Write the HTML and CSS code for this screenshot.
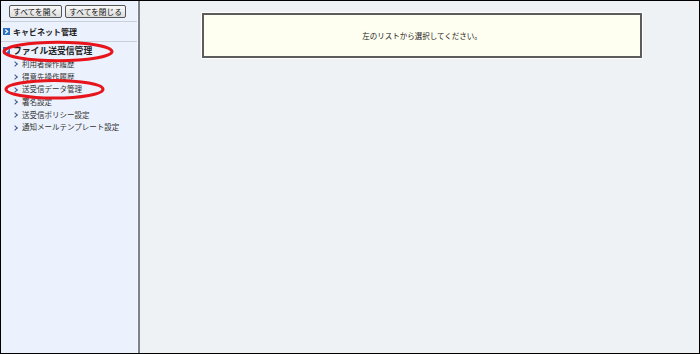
FILE: index.html
```html
<!DOCTYPE html>
<html lang="ja">
<head>
<meta charset="utf-8">
<link rel="stylesheet" href="styles.css">
</head>
<body>
<div class="frame">
  <aside class="side">
    <div class="btns">
      <button class="btn">すべてを開く</button>
      <button class="btn">すべてを閉じる</button>
    </div>
    <div class="group">
      <span class="gicon"><svg width="7" height="7" viewBox="0 0 7 7"><rect width="7" height="7" fill="#2a6fc0"/><path d="M2.3 1.5 L4.6 3.5 L2.3 5.5" fill="none" stroke="#fff" stroke-width="1.3"/></svg></span>
      <span class="gtitle">キャビネット管理</span>
    </div>
    <div class="group open">
      <span class="gicon"><svg width="7" height="7" viewBox="0 0 7 7"><rect width="7" height="7" fill="#2a6fc0"/><path d="M1.5 2.3 L3.5 4.6 L5.5 2.3" fill="none" stroke="#fff" stroke-width="1.3"/></svg></span>
      <span class="gtitle big">ファイル送受信管理</span>
    </div>
    <ul class="items">
      <li>利用者操作履歴</li>
      <li>得意先操作履歴</li>
      <li>送受信データ管理</li>
      <li>署名設定</li>
      <li>送受信ポリシー設定</li>
      <li>通知メールテンプレート設定</li>
    </ul>
    <svg class="marks" width="137" height="110" viewBox="0 0 137 110">
      <ellipse cx="57" cy="50.5" rx="54" ry="9.3" fill="none" stroke="#e8141c" stroke-width="3"/>
      <ellipse cx="53.5" cy="88.3" rx="48.5" ry="8.8" fill="none" stroke="#e8141c" stroke-width="3"/>
    </svg>
  </aside>
  <div class="divider"></div>
  <main class="main">
    <div class="msg">左のリストから選択してください。</div>
  </main>
</div>
</body>
</html>
```
FILE: styles.css
```css
* { box-sizing: border-box; }
html, body { margin: 0; padding: 0; }
body {
  font-family: "Noto Sans CJK JP", "Noto Sans", sans-serif;
  color: #222;
  width: 700px;
  height: 354px;
  overflow: hidden;
}
.frame {
  width: 700px;
  height: 354px;
  border: 1px solid #000;
  display: flex;
}
.side {
  position: relative;
  width: 137px;
  background: #ebf1fd;
  border-right: 1px solid #f6f8fc;
}
.btns {
  display: flex;
  gap: 3px;
  padding: 4px 0 0 8px;
  height: 21px;
  border-bottom: 1px solid #c9d0da;
}
.btn {
  font-family: inherit;
  font-size: 7.7px;
  line-height: 10px;
  height: 13px;
  padding: 0 3px;
  margin: 0;
  color: #111;
  background: linear-gradient(#fafafa, #dcdcdc);
  border: 1px solid #555;
  border-radius: 2px;
}
.group {
  display: flex;
  align-items: center;
  height: 20px;
  padding-left: 2px;
  gap: 3px;
}
.group:not(.open) { border-bottom: 1px solid #c9d0da; }
.group.open { height: 16px; }
.gicon { display: flex; }
.gtitle {
  font-size: 8px;
  font-weight: bold;
  color: #222;
}
.gtitle.big { font-size: 8.8px; }
.items {
  list-style: none;
  margin: 0;
  padding: 0 0 0 12px;
}
.items li {
  font-size: 7.5px;
  line-height: 12.7px;
  height: 12.7px;
  color: #333;
  display: flex;
  align-items: center;
}
.items li::before {
  content: "";
  width: 3px;
  height: 3px;
  border-top: 1px solid #3a5a8a;
  border-right: 1px solid #3a5a8a;
  transform: rotate(45deg);
  margin-right: 5px;
}
.marks {
  position: absolute;
  left: 0;
  top: 0;
}
.divider {
  width: 2px;
  background: #7c828c;
}
.main {
  flex: 1;
  background: #eef2f5;
  padding: 12px 0 0 62px;
}
.msg {
  width: 440px;
  height: 45px;
  background: #fffff1;
  border: 2px solid #5c5c5c;
  box-shadow: 0 0 0 1px #fff;
  display: flex;
  align-items: center;
  justify-content: center;
  font-size: 7.5px;
  color: #222;
}
```
